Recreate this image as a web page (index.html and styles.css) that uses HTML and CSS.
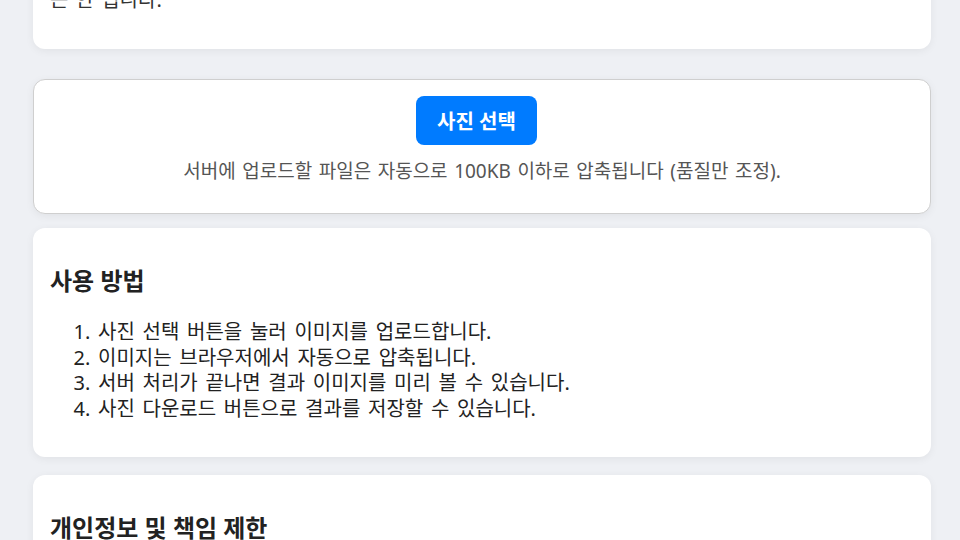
FILE: index.html
```html
<!DOCTYPE html>
<html lang="ko">
<head>
<meta charset="utf-8">
<link rel="stylesheet" href="styles.css">
</head>
<body>
<main class="page">
  <section class="card card-top">
    <p class="note">는 안 됩니다.</p>
  </section>
  <section class="card card-upload">
    <button class="btn-primary" type="button">사진 선택</button>
    <p class="hint">서버에 업로드할 파일은 자동으로 100KB 이하로 압축됩니다 (품질만 조정).</p>
  </section>
  <section class="card card-howto">
    <h2 class="card-title">사용 방법</h2>
    <ol class="steps">
      <li>사진 선택 버튼을 눌러 이미지를 업로드합니다.</li>
      <li>이미지는 브라우저에서 자동으로 압축됩니다.</li>
      <li>서버 처리가 끝나면 결과 이미지를 미리 볼 수 있습니다.</li>
      <li>사진 다운로드 버튼으로 결과를 저장할 수 있습니다.</li>
    </ol>
  </section>
  <section class="card card-privacy">
    <h2 class="card-title">개인정보 및 책임 제한</h2>
  </section>
</main>
</body>
</html>
```

FILE: styles.css
```css
html, body {
  margin: 0;
  padding: 0;
  background: #eef0f4;
  overflow: hidden;
}
body {
  font-family: "Noto Sans", "Noto Sans CJK KR", sans-serif;
  color: #222;
}
.page {
  width: 898px;
  margin: 0 0 0 33px;
  display: flex;
  flex-direction: column;
}
.card {
  background: #fff;
  border-radius: 12px;
  box-shadow: 0 2px 8px rgba(0, 0, 0, 0.06);
  box-sizing: border-box;
}
.card-top {
  margin-top: -40px;
  height: 89px;
  padding: 27px 17px 0;
}
.note {
  margin: 0;
  font-size: 20px;
  line-height: 26px;
  word-spacing: 2px;
  color: #333;
}
.card-upload {
  margin-top: 30px;
  height: 135px;
  border: 1px solid #cfcfcf;
  padding: 16px 17px 0;
  display: flex;
  flex-direction: column;
  align-items: center;
}
.btn-primary {
  width: 121px;
  height: 49px;
  border: none;
  border-radius: 8px;
  background: #007bff;
  color: #fff;
  font-family: inherit;
  font-size: 20px;
  font-weight: 700;
  margin-right: 11px;
  padding: 0;
}
.hint {
  margin: 13px 0 0;
  font-size: 19px;
  line-height: 26px;
  word-spacing: 1.6px;
  color: #555;
}
.card-howto {
  margin-top: 14px;
  height: 229px;
  padding: 35px 17px 0;
}
.card-title {
  margin: 0;
  font-size: 24px;
  line-height: 36px;
  font-weight: 700;
  color: #222;
}
.steps {
  margin: 20px 0 0;
  padding-left: 48px;
  font-size: 20px;
  line-height: 25.7px;
  word-spacing: 2.5px;
}
.card-privacy {
  margin-top: 18px;
  height: 120px;
  padding: 35px 17px 0;
}
```
